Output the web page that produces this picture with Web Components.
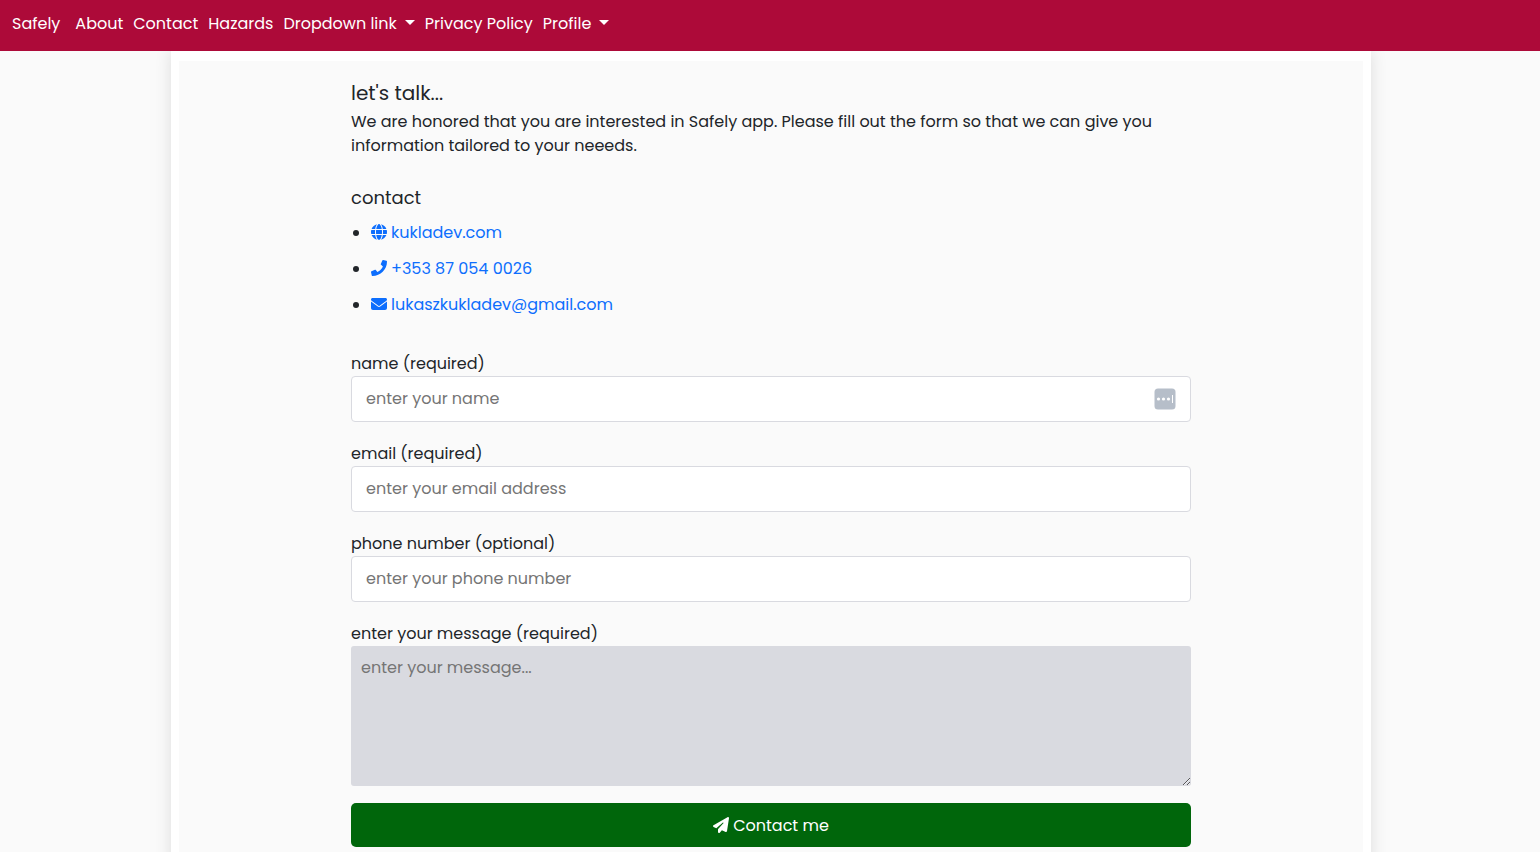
<!DOCTYPE html>
<html lang="en">
<head>
<meta charset="utf-8">
<meta name="viewport" content="width=device-width, initial-scale=1">
<title>Safely – Contact</title>
<style>
  :root {
    --brand: #ad0a39;
    --page: #fafafa;
    --ink: #212529;
    --link: #0d6efd;
    --line: #d9dae0;
    --action: #00660b;
  }
  * { box-sizing: border-box; }
  body {
    margin: 0;
    min-height: 100vh;
    display: flex;
    flex-direction: column;
    background: var(--page);
    color: var(--ink);
    font: 400 16px/24px Poppins, Inter, "Liberation Sans", sans-serif;
  }
  page-card { flex: 1; }
</style>
</head>
<body>
<site-nav>
  <nav-item slot="brand" href="#home">Safely</nav-item>
  <nav-item href="#about">About</nav-item>
  <nav-item href="#contact">Contact</nav-item>
  <nav-item href="#hazards">Hazards</nav-item>
  <nav-item menu>Dropdown link</nav-item>
  <nav-item href="#privacy">Privacy Policy</nav-item>
  <nav-item menu>Profile</nav-item>
</site-nav>
<page-card>
  <contact-intro>
    <span slot="title">let's talk...</span>
    We are honored that you are interested in Safely app. Please fill out the form so that we can give you information tailored to your neeeds.
  </contact-intro>
  <contact-list heading="contact">
    <contact-link icon="globe" href="#site">kukladev.com</contact-link>
    <contact-link icon="phone" href="tel:+353870540026">+353 87 054 0026</contact-link>
    <contact-link icon="envelope" href="mailto:lukaszkukladev@gmail.com">lukaszkukladev@gmail.com</contact-link>
  </contact-list>
  <contact-form></contact-form>
</page-card>

<script>
const define = (name, render, setup) => customElements.define(name, class extends HTMLElement {
  connectedCallback() {
    if (this.shadowRoot) return;
    this.attachShadow({ mode: 'open' }).innerHTML =
      '<style>*{box-sizing:border-box}</style>' + render(this);
    if (setup) setup(this);
  }
});

const icons = {
  globe: '<path d="M352 256c0 22.2-1.200 43.600-3.300 64H163.300c-2.200-20.400-3.300-41.800-3.300-64s1.200-43.600 3.300-64h185.400c2.200 20.400 3.300 41.800 3.300 64zm28.800-64h123.100c5.300 20.500 8.100 41.900 8.100 64s-2.800 43.500-8.100 64H380.800c2.100-20.600 3.200-42 3.200-64s-1.100-43.400-3.200-64zm112.600-32H376.700c-10-63.900-29.800-117.400-55.300-151.600 78.300 20.700 142 77.500 171.900 151.600zm-149.100 0H167.700c6.100-36.400 15.500-68.600 27-94.700 10.500-23.600 22.200-40.700 33.500-51.500C239.400 3.200 248.700 0 256 0s16.600 3.200 27.800 13.800c11.300 10.800 23 27.900 33.500 51.500 11.600 26 20.900 58.200 27 94.700zm-209 0H18.600C48.600 85.900 112.200 29.100 190.600 8.400 165.100 42.600 145.300 96.100 135.300 160zM8.100 192h123.100c-2.100 20.600-3.200 42-3.200 64s1.100 43.400 3.200 64H8.100C2.800 299.500 0 278.100 0 256s2.800-43.500 8.100-64zm186.600 254.600c-11.600-26-20.900-58.200-27-94.600h176.600c-6.100 36.400-15.500 68.600-27 94.600-10.500 23.600-22.200 40.700-33.500 51.500C272.600 508.800 263.300 512 256 512s-16.600-3.200-27.800-13.800c-11.300-10.800-23-27.900-33.500-51.500zM135.300 352c10 63.900 29.800 117.400 55.300 151.600C112.200 482.900 48.600 426.100 18.600 352h116.700zm358.100 0c-30 74.100-93.600 130.900-171.900 151.600 25.500-34.200 45.200-87.700 55.300-151.600h116.600z"/>',
  phone: '<path d="M493.400 24.600l-104-24c-11.300-2.600-22.900 3.300-27.500 13.900l-48 112c-4.200 9.800-1.400 21.300 6.900 28l60.600 49.600c-36 76.700-98.900 140.500-177.200 177.200l-49.600-60.600c-6.800-8.300-18.200-11.100-28-6.900l-112 48C3.900 366.500-2 378.100.6 389.400l24 104C27.100 504.200 36.700 512 48 512c256.100 0 464-207.500 464-464 0-11.200-7.700-20.900-18.600-23.400z"/>',
  envelope: '<path d="M48 64C21.500 64 0 85.500 0 112c0 15.100 7.100 29.300 19.200 38.400L236.800 313.600c11.400 8.500 27 8.500 38.400 0L492.800 150.400c12.100-9.100 19.200-23.300 19.200-38.400 0-26.500-21.500-48-48-48H48zM0 176v208c0 35.300 28.700 64 64 64h384c35.300 0 64-28.700 64-64V176L294.400 339.200c-22.800 17.100-54 17.100-76.800 0L0 176z"/>',
  plane: '<path d="M498.100 5.600c10.100 7 15.400 19.100 13.500 31.200l-64 416c-1.500 9.700-7.400 18.200-16 23s-18.900 5.400-28 1.600L284 427.700l-68.500 74.100c-8.900 9.700-22.900 12.900-35.200 8.100S160 493.200 160 480v-83.600c0-4 1.500-7.800 4.200-10.800L331.800 202.800c5.800-6.300 5.600-16-.4-22s-15.700-6.400-22-.7L106 360.800 17.700 316.600C7.100 311.300.3 300.700 0 288.900s5.900-22.800 16.100-28.700l448-256c10.700-6.100 23.900-5.500 34 1.400z"/>'
};
const icon = name => `<svg viewBox="0 0 512 512" width="16" height="16" fill="currentColor" aria-hidden="true">${icons[name]}</svg>`;

define('nav-item', el => `
  <style>
    :host { display: block; }
    a, button { display: flex; align-items: center; gap: 8px; padding: 0; border: 0; background: none;
      color: #fff; font: inherit; text-decoration: none; white-space: nowrap; cursor: pointer; }
    i { border: 5px solid transparent; border-top-color: #fff; border-bottom: 0; margin-bottom: 2px; }
  </style>
  ${el.hasAttribute('menu')
    ? '<button type="button" aria-haspopup="true"><slot></slot><i></i></button>'
    : `<a href="${el.getAttribute('href')}"><slot></slot></a>`}`);

define('site-nav', () => `
  <style>
    :host { display: block; background: var(--brand); position: relative; }
    nav { display: flex; flex-wrap: wrap; align-items: center; gap: 15px; min-height: 51px; padding: 0 12px 4px; }
    div { display: flex; flex-wrap: wrap; gap: 10px; }
  </style>
  <nav aria-label="Main"><slot name="brand"></slot><div><slot></slot></div></nav>`);

define('page-card', () => `
  <style>
    :host { display: flex; justify-content: center; padding-left: 2px; }
    main { width: 100%; max-width: 1200px; padding: 10px 8px 0; background: #fff; box-shadow: 0 0 16px rgba(0,0,0,.12); }
    section { min-height: 100%; padding: 20px 16px; background: var(--page); }
    .column { max-width: 840px; margin: 0 auto; }
  </style>
  <main><section><div class="column"><slot></slot></div></section></main>`);

define('contact-intro', () => `
  <style>
    :host { display: block; margin-bottom: 28px; }
    h1 { margin: 0 0 5px; font-size: 20px; line-height: 24px; font-weight: 400; }
    p { margin: 0; }
  </style>
  <h1><slot name="title"></slot></h1><p><slot></slot></p>`);

define('contact-list', el => `
  <style>
    :host { display: block; margin-bottom: 35px; }
    h2 { margin: 0 0 11px; font-size: 18px; line-height: 24px; font-weight: 400; }
    div { display: grid; gap: 12px; padding-left: 20px; }
  </style>
  <h2>${el.getAttribute('heading')}</h2><div role="list"><slot></slot></div>`);

define('contact-link', el => `
  <style>
    :host { display: list-item; list-style: disc; }
    a { display: inline-flex; align-items: center; gap: 4px; color: var(--link); text-decoration: none; vertical-align: top; }
    svg { margin-bottom: 2px; }
  </style>
  <a href="${el.getAttribute('href')}">${icon(el.getAttribute('icon'))}<slot></slot></a>`,
  el => el.setAttribute('role', 'listitem'));

define('form-field', el => {
  const hint = el.getAttribute('hint');
  const type = el.getAttribute('type');
  return `
  <style>
    :host { display: block; }
    label { display: block; }
    .box { display: grid; align-items: center; }
    .box > * { grid-area: 1 / 1; }
    input, textarea { display: block; width: 100%; margin: 0; font: inherit; color: inherit; border-radius: 4px; }
    input { height: 46px; padding: 0 14px 2px; background: #fff; border: 1px solid var(--line); }
    textarea { height: 140px; padding: 10px; background: var(--line); border: 0; border-radius: 3px; resize: vertical; }
    ::placeholder { color: #757575; opacity: 1; }
    svg { justify-self: end; margin-right: 15px; }
  </style>
  <label for="control"><slot></slot></label>
  <div class="box">${type === 'textarea'
    ? `<textarea id="control" placeholder="${hint}"></textarea>`
    : `<input id="control" type="${type}" placeholder="${hint}">`}
  ${el.hasAttribute('autofill') ? `<svg width="22" height="22" viewBox="0 0 22 22" aria-hidden="true">
      <rect x=".5" y=".5" width="21" height="21" rx="3.500" fill="#b6bec9"/>
      <g fill="#fff"><circle cx="4.500" cy="11" r="1.600"/><circle cx="9.500" cy="11" r="1.600"/><circle cx="14.500" cy="11" r="1.600"/><rect x="18" y="7" width="1" height="8"/></g>
    </svg>` : ''}</div>`;
});

define('contact-form', () => `
  <style>
    :host { display: block; }
    form { display: grid; gap: 20px; margin: 0; }
    .send { display: grid; gap: 17px; }
    button { display: flex; align-items: center; justify-content: center; gap: 4px; width: 100%; height: 44px;
      padding: 2px 6px 0; border: 0; border-radius: 5px; background: var(--action); color: #fff; font: inherit; cursor: pointer; }
    svg { margin-bottom: 2px; }
  </style>
  <form>
    <form-field type="text" hint="enter your name" autofill>name (required)</form-field>
    <form-field type="email" hint="enter your email address">email (required)</form-field>
    <form-field type="tel" hint="enter your phone number">phone number (optional)</form-field>
    <div class="send">
      <form-field type="textarea" hint="enter your message...">enter your message (required)</form-field>
      <button type="submit">${icon('plane')}<span>Contact me</span></button>
    </div>
  </form>`);
</script>
</body>
</html>
